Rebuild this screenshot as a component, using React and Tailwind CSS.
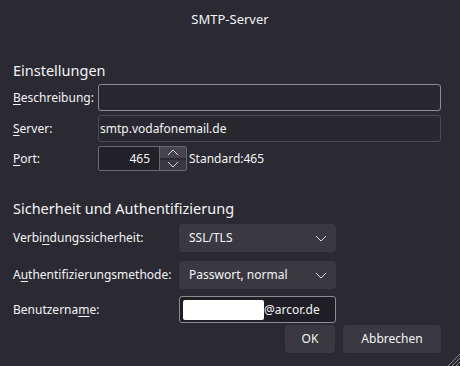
import React from "react"

function Label({ text, k }) {
    // k = index of the access-key letter to underline
    return (
        <span className="whitespace-nowrap">
            {text.slice(0, k)}
            <span className="underline underline-offset-2">{text[k]}</span>
            {text.slice(k + 1)}
        </span>
    )
}

function Chevron({ up = false, className = "" }) {
    return (
        <svg width="12" height="7" viewBox="0 0 12 7" className={className}>
            <path
                d={up ? "M1 6 L6 1 L11 6" : "M1 1 L6 6 L11 1"}
                fill="none"
                stroke="#d8d8de"
                strokeWidth="1"
            />
        </svg>
    )
}

function Select({ value, className = "" }) {
    return (
        <div className={"h-[28px] w-[157px] rounded-[4px] bg-[#3a3941] flex items-center justify-between pl-[10px] pr-[9px] " + className}>
            <span>{value}</span>
            <Chevron className="mt-[1px]" />
        </div>
    )
}

export default function App() {
    return (
        <div
            className="relative w-[460px] h-[366px] overflow-hidden bg-[#2b2a32] text-[#f4f4f6] text-[12px] leading-none"
            style={{ fontFamily: '"Noto Sans", "Open Sans", sans-serif' }}
        >
            {/* Title */}
            <div className="h-[38px] flex items-center justify-center text-[13px]">SMTP-Server</div>

            {/* Einstellungen */}
            <div className="pl-[13px] pr-[19px]">
                <div className="mt-[22px] h-[20px] flex items-center text-[14.5px]">Einstellungen</div>

                <div className="mt-[4px] grid grid-cols-[85px_1fr] gap-y-[4px] items-center">
                    <Label text="Beschreibung:" k={0} />
                    <div className="h-[27px] rounded-[3px] border border-[#8d8c95] bg-[#29282f]" />

                    <Label text="Server:" k={0} />
                    <div className="h-[27px] rounded-[3px] border border-[#4c4b53] bg-[#29282f] flex items-center pl-[1px]">
                        smtp.vodafonemail.de
                    </div>

                    <Label text="Port:" k={0} />
                    <div className="flex items-center">
                        <div className="h-[25px] w-[89px] flex rounded-[2px] border border-[#6a6972] bg-[#222128]">
                            <div className="flex-1 flex items-center justify-end pr-[9px]">465</div>
                            <div className="w-[27px] flex flex-col border-l border-[#6a6972]">
                                <div className="flex-1 flex items-center justify-center bg-[#45444c] border-b-2 border-[#2b2a32]">
                                    <Chevron up />
                                </div>
                                <div className="flex-1 flex items-center justify-center bg-[#3a3941]">
                                    <Chevron />
                                </div>
                            </div>
                        </div>
                        <span className="ml-[2px]">Standard:465</span>
                    </div>
                </div>

                {/* Sicherheit */}
                <div className="mt-[27px] h-[20px] flex items-center text-[14.5px]">Sicherheit und Authentifizierung</div>

                <div className="mt-[6px] grid grid-cols-[166px_auto] items-center">
                    <Label text="Verbindungssicherheit:" k={5} />
                    <Select value="SSL/TLS" />

                    <div className="h-[9px] col-span-2" />

                    <Label text="Authentifizierungsmethode:" k={1} />
                    <Select value="Passwort, normal" />

                    <div className="h-[7px] col-span-2" />

                    <Label text="Benutzername:" k={10} />
                    <div className="h-[27px] w-[157px] rounded-[3px] border border-[#8d8c95] bg-[#1f1e25] flex items-center pl-[3px]">
                        <span className="h-[20px] w-[81px] bg-white rounded-[2px]" />
                        <span>@arcor.de</span>
                    </div>
                </div>

                {/* Buttons */}
                <div className="mt-[2px] flex justify-end gap-[8px]">
                    <button className="h-[28px] w-[50px] rounded-[4px] bg-[#3a3941]">OK</button>
                    <button className="h-[28px] w-[98px] rounded-[4px] bg-[#3a3941]">Abbrechen</button>
                </div>
            </div>

            {/* resize grip */}
            <svg width="14" height="14" viewBox="0 0 14 14" className="absolute right-0 bottom-0">
                <path d="M14 2 L2 14 M14 6 L6 14 M14 10 L10 14" stroke="#8a8991" strokeWidth="1" />
            </svg>
        </div>
    )
}
